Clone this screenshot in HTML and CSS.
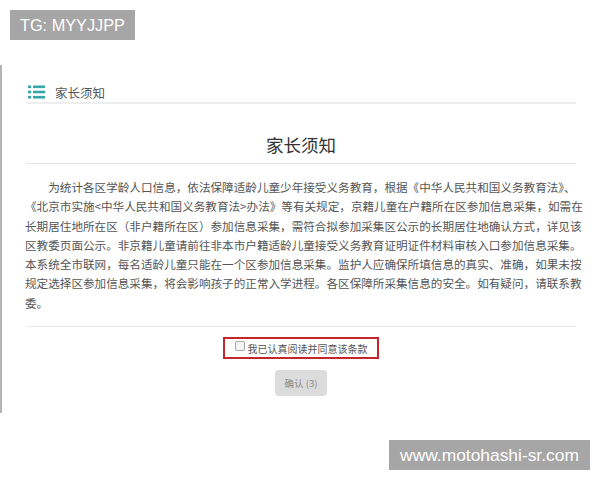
FILE: index.html
```html
<!doctype html>
<html>
<head>
	<meta charset="utf-8" />
	<title>家长须知</title>
	<link rel="stylesheet" href="styles.css">
</head>
<body>
	<div class="mark mark-top">TG: MYYJJPP</div>

	<div class="panel">
		<div class="panel-head">
			<svg class="list-icon" width="17" height="14" viewBox="0 0 17 14">
				<rect x="0" y="0.5" width="3" height="2.6" />
				<rect x="5" y="0.5" width="12" height="2.6" />
				<rect x="0" y="5.7" width="3" height="2.6" />
				<rect x="5" y="5.7" width="12" height="2.6" />
				<rect x="0" y="10.9" width="3" height="2.6" />
				<rect x="5" y="10.9" width="12" height="2.6" />
			</svg>
			<span>家长须知</span>
		</div>

		<h2 class="notice-title">家长须知</h2>

		<p class="notice-text">为统计各区学龄人口信息，依法保障适龄儿童少年接受义务教育，根据《中华人民共和国义务教育法》、<br>《北京市实施&lt;中华人民共和国义务教育法&gt;办法》等有关规定，京籍儿童在户籍所在区参加信息采集，如需在<br>长期居住地所在区（非户籍所在区）参加信息采集，需符合拟参加采集区公示的长期居住地确认方式，详见该<br>区教委页面公示。非京籍儿童请前往非本市户籍适龄儿童接受义务教育证明证件材料审核入口参加信息采集。<br>本系统全市联网，每名适龄儿童只能在一个区参加信息采集。监护人应确保所填信息的真实、准确，如果未按<br>规定选择区参加信息采集，将会影响孩子的正常入学进程。各区保障所采集信息的安全。如有疑问，请联系教<br>委。</p>

		<div class="notice-foot">
			<label class="agree">
				<input type="checkbox" />
				<span>我已认真阅读并同意该条款</span>
			</label>
			<button class="btn-ok" disabled>确认 (3)</button>
		</div>
	</div>

	<div class="mark mark-bottom">www.motohashi-sr.com</div>
</body>
</html>
```

FILE: styles.css
```css
body,
h2,
p {
	margin: 0;
	padding: 0;
}

body {
	background: #fff;
	font-family: "Noto Sans CJK SC", "Noto Sans", sans-serif;
	color: #555;
}

.mark {
	position: absolute;
	background: #a6a6a6;
	color: #fff;
	font-family: "Liberation Sans", Arial, sans-serif;
	line-height: 30px;
	text-align: center;
}

.mark-top {
	left: 10px;
	top: 10px;
	width: 125px;
	font-size: 16.3px;
}

.mark-bottom {
	left: 389px;
	top: 440px;
	width: 201px;
	font-size: 17.4px;
}

.panel {
	margin-top: 65px;
	height: 348px;
	padding: 17px 24px 0;
	border-left: 2px solid #b4b4b4;
	box-sizing: border-box;
}

.panel-head {
	display: flex;
	align-items: center;
	gap: 10px;
	height: 20px;
	padding: 0 2px;
	border-bottom: 2px solid #eee;
	font-size: 12.5px;
	color: #555;
}

.list-icon {
	fill: #36a6aa;
}

.notice-title {
	margin-top: 29px;
	padding-bottom: 6px;
	border-bottom: 1px solid #e4e4e4;
	font-size: 17.5px;
	font-weight: normal;
	line-height: 24px;
	text-align: center;
	color: #333;
}

.notice-text {
	margin: 14px 0 13px -1px;
	font-size: 11.6px;
	line-height: 19.3px;
	text-indent: 2em;
	white-space: nowrap;
	color: #555;
}

.notice-foot {
	display: flex;
	flex-direction: column;
	align-items: center;
	gap: 11px;
	padding-top: 10px;
	border-top: 1px solid #e8e8e8;
}

.agree {
	display: flex;
	align-items: center;
	justify-content: center;
	gap: 3px;
	width: 156px;
	height: 22px;
	border: 2px solid #c5262e;
	box-sizing: border-box;
	font-size: 10px;
	white-space: nowrap;
	color: #555;
}

.agree input {
	appearance: none;
	width: 10px;
	height: 10px;
	margin: -4px 0 0;
	border: 1px solid #a8a8a8;
	border-radius: 2px;
	background: #f4f4f4;
}

.btn-ok {
	width: 52px;
	height: 26px;
	border: 0;
	border-radius: 4px;
	background: #dcdcdc;
	font-family: "Noto Sans CJK SC", sans-serif;
	font-size: 9.5px;
	color: #888;
}
```
